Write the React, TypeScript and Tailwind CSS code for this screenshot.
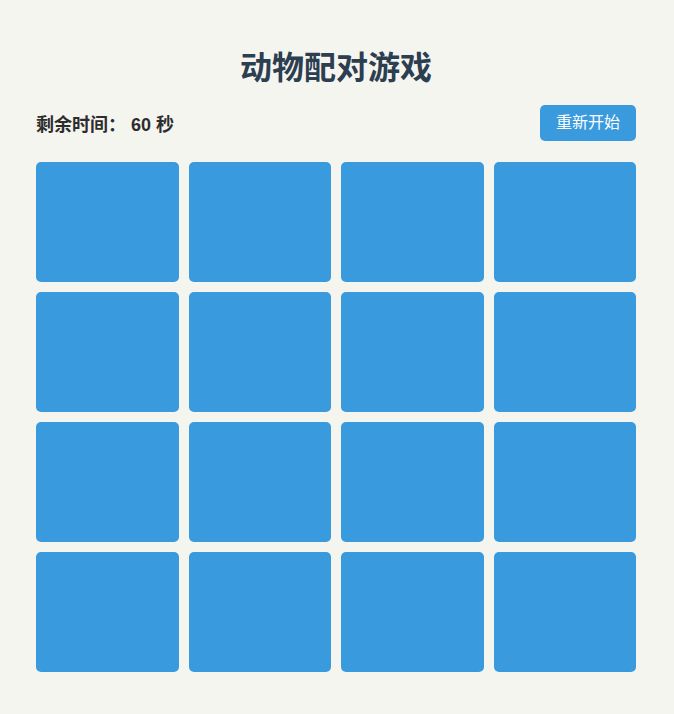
export default function App() {
	const cards = Array.from({ length: 16 }, (_, i) => i);

	return (
		<div
			className="min-h-[714px] bg-[#f5f5f0] pt-[44px]"
			style={{ fontFamily: '"Liberation Sans", "Noto Sans CJK SC", sans-serif' }}
		>
			<div className="ml-[36px] w-[600px]">
				<h1 className="mb-[13px] text-center text-[32px] font-bold leading-[48px] text-[#2c3e50]">
					动物配对游戏
				</h1>

				<div className="mb-[21px] flex h-9 items-center justify-between">
					<div className="pt-[3px] text-lg font-bold text-[#2d2d2d]">剩余时间： 60 秒</div>
					<button className="h-9 w-24 rounded-[5px] bg-[#3a9ade] text-base text-white">
						重新开始
					</button>
				</div>

				<div className="grid grid-cols-4 gap-[10px]">
					{cards.map((i) => (
						<div key={i} className="h-[120px] rounded-[5px] bg-[#3a9ade]" />
					))}
				</div>
			</div>
		</div>
	);
}
